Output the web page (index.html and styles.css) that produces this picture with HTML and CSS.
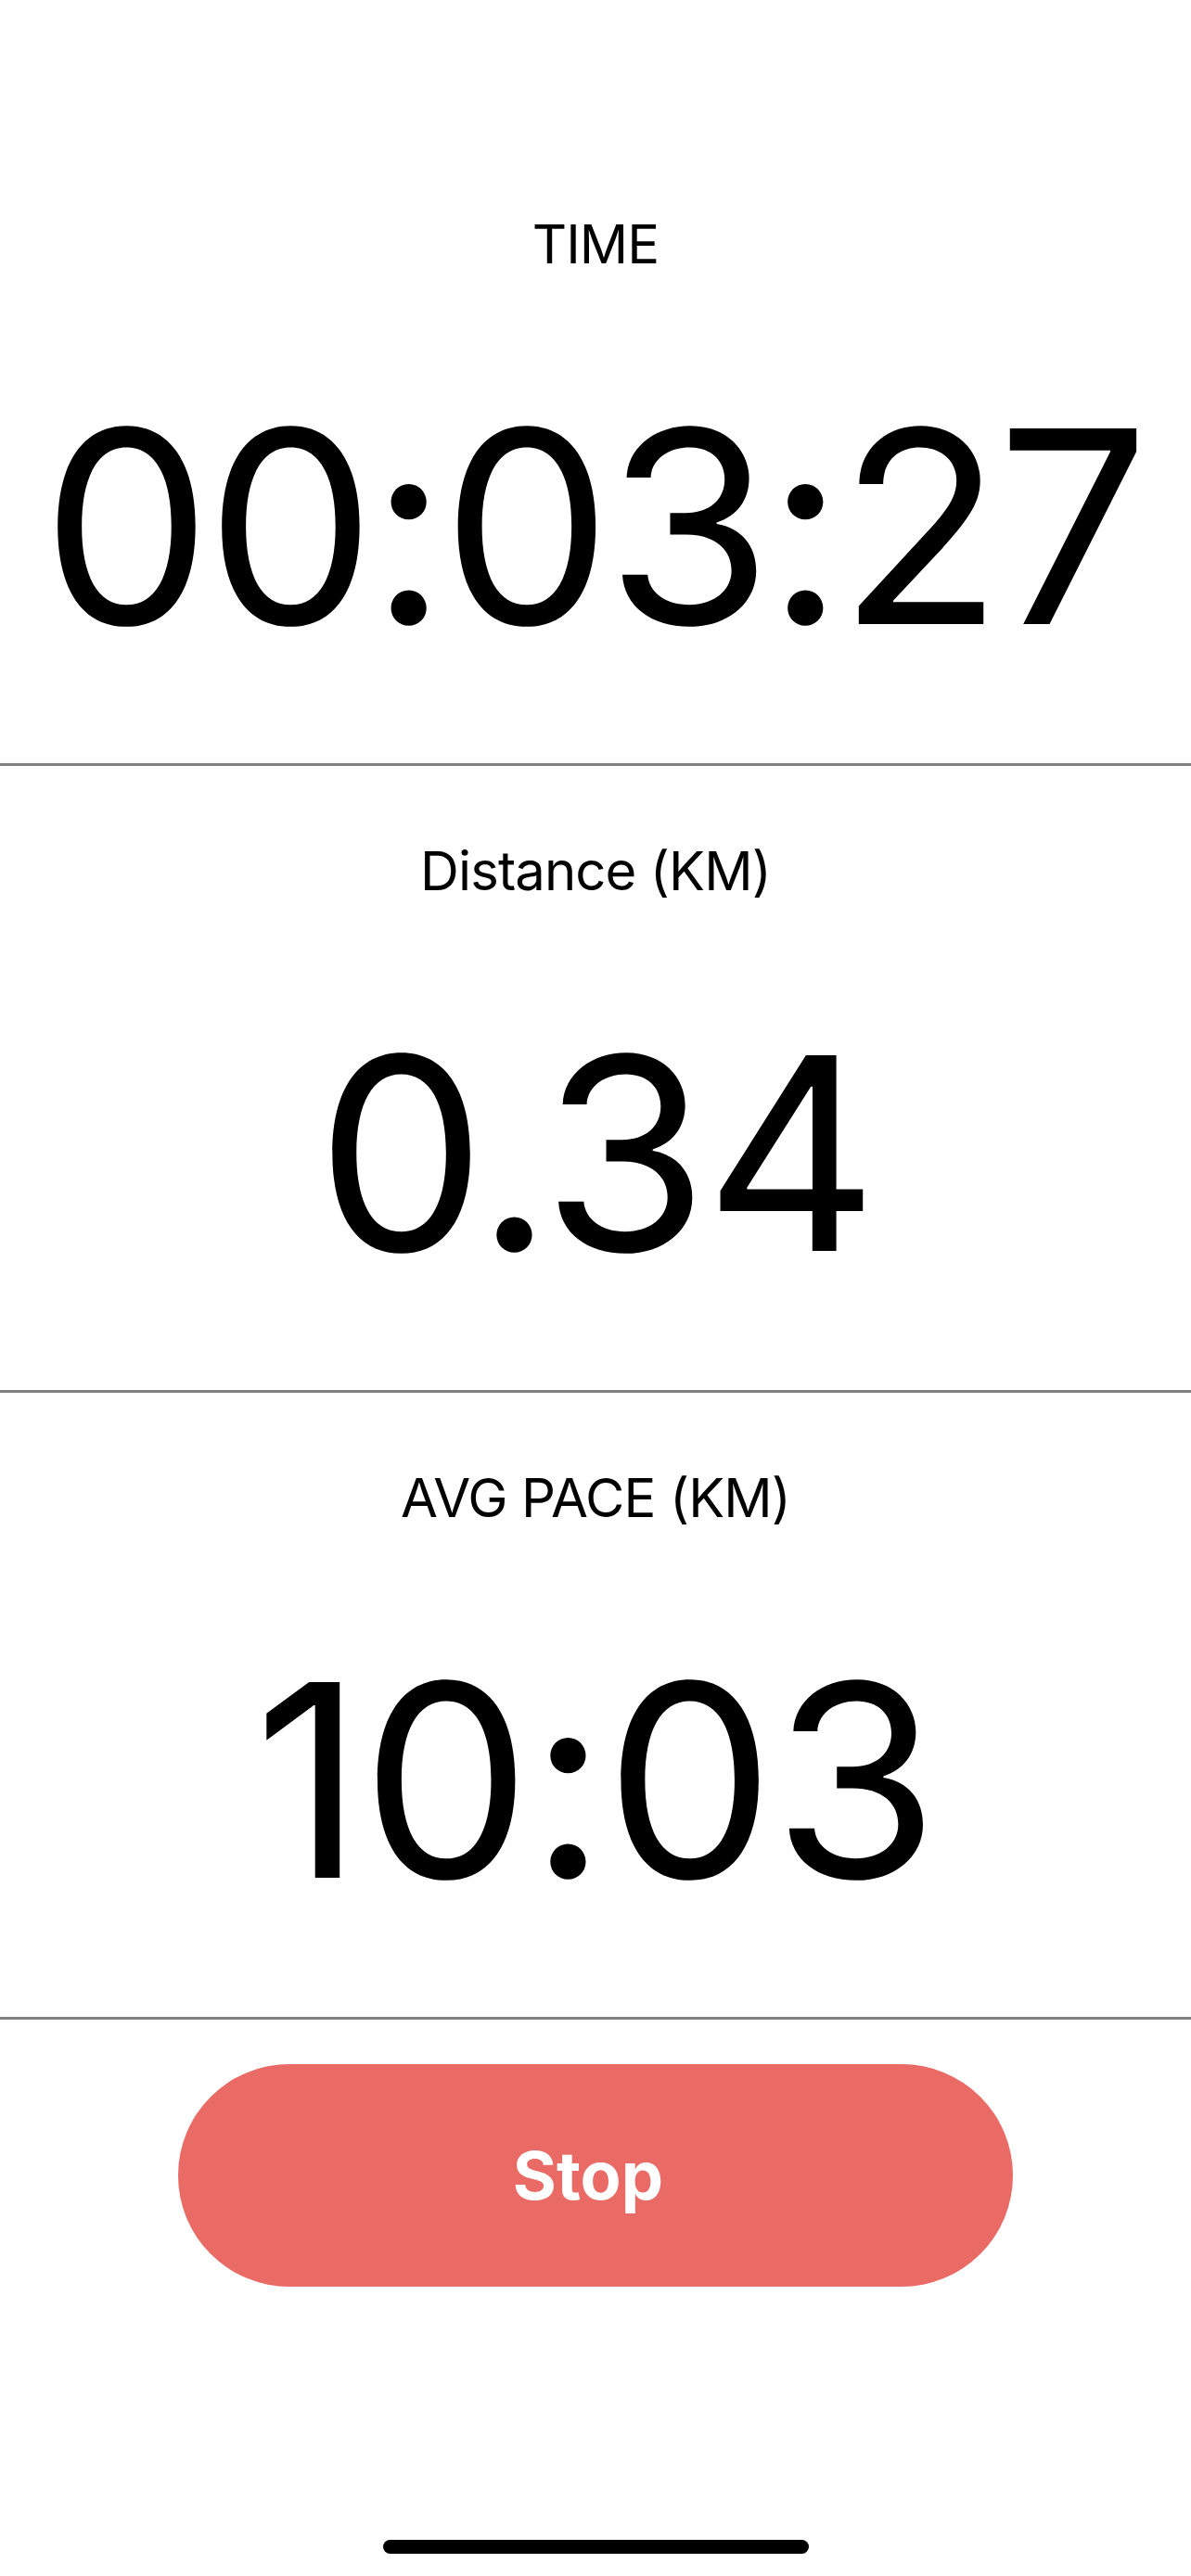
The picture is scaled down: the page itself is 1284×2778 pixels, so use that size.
FILE: index.html
```html
<!DOCTYPE html>
<html lang="en">
<head>
<meta charset="utf-8">
<title>Run</title>
<link rel="stylesheet" href="styles.css">
</head>
<body>
<main class="screen">
  <section class="metric">
    <div class="metric-label">TIME</div>
    <div class="metric-value metric-value--time">00:03:27</div>
  </section>
  <section class="metric">
    <div class="metric-label">Distance (KM)</div>
    <div class="metric-value metric-value--distance">0.34</div>
  </section>
  <section class="metric">
    <div class="metric-label">AVG PACE (KM)</div>
    <div class="metric-value metric-value--pace">10:03</div>
  </section>
  <div class="actions">
    <button class="stop-button" type="button">Stop</button>
  </div>
  <div class="home-indicator"></div>
</main>
</body>
</html>
```

FILE: styles.css
```css
* {
  box-sizing: border-box;
}

html, body {
  margin: 0;
  padding: 0;
  background: #ffffff;
}

body {
  font-family: Inter, "Noto Sans", "Liberation Sans", sans-serif;
  color: #000000;
}

.screen {
  width: 1284px;
  min-height: 2778px;
  padding-top: 150px;
  display: flex;
  flex-direction: column;
}

.metric {
  display: flex;
  flex-direction: column;
  align-items: center;
  gap: 130px;
  padding: 83px 0 110px;
  height: 676px;
  border-bottom: 3px solid #808080;
}

.metric-label {
  font-size: 58px;
  line-height: 60px;
  font-weight: 400;
  letter-spacing: -0.9px;
  white-space: nowrap;
}

.metric-value {
  font-size: 290px;
  line-height: 290px;
  font-weight: 400;
  white-space: nowrap;
}

.metric-value--time {
  letter-spacing: -6px;
  margin-left: -6px;
}

.metric-value--distance {
  letter-spacing: -4px;
}

.metric-value--pace {
  letter-spacing: -2px;
}

.actions {
  display: flex;
  justify-content: center;
  padding-top: 48px;
}

.stop-button {
  width: 900px;
  height: 240px;
  border: none;
  border-radius: 120px;
  background: #ea6a65;
  color: #ffffff;
  font-family: Inter, "Noto Sans", "Liberation Sans", sans-serif;
  font-size: 72px;
  line-height: 72px;
  font-weight: 700;
  display: flex;
  align-items: center;
  justify-content: center;
  padding: 0 16px 0 0;
}

.home-indicator {
  margin: auto auto 24px;
  width: 459px;
  height: 15px;
  border-radius: 8px;
  background: #000000;
}
```
